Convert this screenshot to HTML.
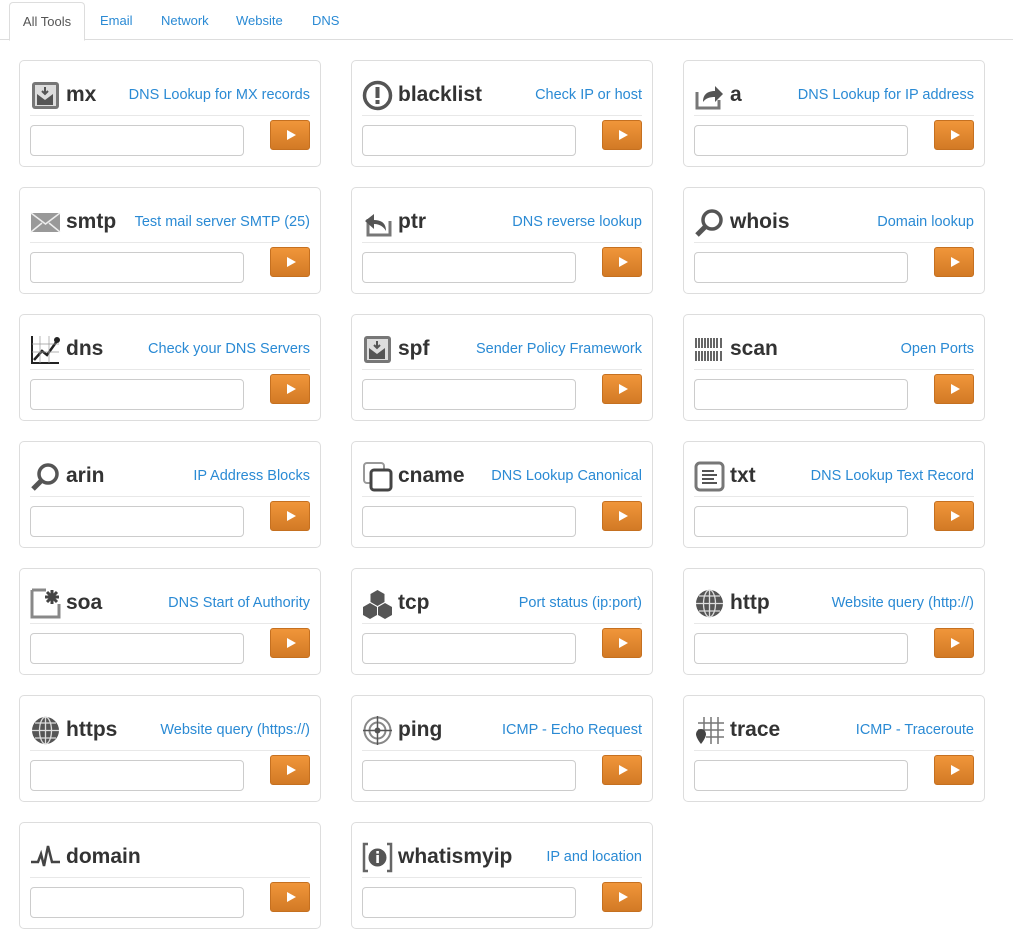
<!DOCTYPE html>
<html><head><meta charset="utf-8"><style>
*{box-sizing:border-box}
body{margin:0;width:1023px;height:916px;overflow:hidden;background:#fff;font-family:"Liberation Sans",Arial,sans-serif;position:relative}
.tabs{position:absolute;left:0;top:0;width:1013px;height:40px;border-bottom:1px solid #ddd}
.tab{position:absolute;top:13px;font-size:13px;color:#2a8ad4}
.tab.act{top:2px;left:9px;width:76px;height:39px;border:1px solid #ddd;border-bottom:1px solid #fff;border-radius:4px 4px 0 0;background:#fff;color:#555;padding-top:11px;text-align:center}
.card{position:absolute;width:302px;height:107px;border:1px solid #ddd;border-radius:5px;background:#fff}
.ic{position:absolute;left:10px;top:19px;width:31px;height:31px}
.t{position:absolute;left:46px;top:22px;font-size:21px;font-weight:bold;color:#333}
.d{position:absolute;right:10px;top:26px;font-size:14.5px;color:#2a8ad4}
.sep{position:absolute;left:10px;right:10px;top:54px;border-top:1px solid #e8e8e8}
.in{position:absolute;left:10px;top:64px;width:214px;height:31px;border:1px solid #ccc;border-radius:4px}
.b{position:absolute;left:250px;top:59px;width:40px;height:30px;border-radius:3px;background:linear-gradient(#f0963a,#d27a25);border:1px solid #c57020}
.b:after{content:"";position:absolute;left:16px;top:9px;border-left:9px solid #fff;border-top:5px solid transparent;border-bottom:5px solid transparent}
</style></head><body>
<div class="tabs">
<div class="tab act">All Tools</div>
<div class="tab" style="left:100px">Email</div>
<div class="tab" style="left:161px">Network</div>
<div class="tab" style="left:236px">Website</div>
<div class="tab" style="left:312px">DNS</div>
</div>
<script>
var d=[["mx","DNS Lookup for MX records","m"],["blacklist","Check IP or host","!"],["a","DNS Lookup for IP address","a"],
["smtp","Test mail server SMTP (25)","e"],["ptr","DNS reverse lookup","p"],["whois","Domain lookup","w"],
["dns","Check your DNS Servers","g"],["spf","Sender Policy Framework","m"],["scan","Open Ports","s"],
["arin","IP Address Blocks","w"],["cname","DNS Lookup Canonical","c"],["txt","DNS Lookup Text Record","t"],
["soa","DNS Start of Authority","o"],["tcp","Port status (ip:port)","h"],["http","Website query (http://)","G"],
["https","Website query (https://)","G"],["ping","ICMP - Echo Request","r"],["trace","ICMP - Traceroute","x"],
["domain","","z"],["whatismyip","IP and location","i"]];
var ic={
m:'<rect x="2" y="2" width="27" height="27" rx="3" fill="#777"/><rect x="5" y="5" width="21" height="21" fill="#ddd"/><path d="M7 14l8 6 8-6v11H7z" fill="#555"/><path d="M15 7v7m-3-3l3 3 3-3" stroke="#555" stroke-width="2" fill="none"/>',
"!":'<circle cx="15.5" cy="15.5" r="13" fill="none" stroke="#555" stroke-width="3.5"/><rect x="13.5" y="7" width="4" height="11" fill="#555"/><rect x="13.5" y="20" width="4" height="4" fill="#555"/>',
a:'<path d="M3 12v16h22v-8" stroke="#777" stroke-width="3" fill="none"/><path d="M9 22c0-8 5-11 12-11V6l8 8-8 8v-5c-5 0-9 1-12 5z" fill="#555"/>',
e:'<rect x="1" y="6" width="29" height="19" fill="#999"/><path d="M1 6l14.5 11L30 6M1 25l11-9M30 25l-11-9" stroke="#eee" stroke-width="1.5" fill="none"/>',
p:'<path d="M6 12v16h22V14" stroke="#777" stroke-width="3" fill="none"/><path d="M24 24c0-8-5-11-12-11V7L3 14l9 8v-5c5 0 9 2 12 7z" fill="#555"/>',
w:'<circle cx="18" cy="13" r="9" fill="none" stroke="#555" stroke-width="3.5"/><path d="M11 20l-8 8" stroke="#555" stroke-width="5"/>',
g:'<path d="M2 2v27h27" stroke="#222" stroke-width="2" fill="none"/><path d="M4 26l8-9 5 4 10-14" stroke="#222" stroke-width="2.5" fill="none"/><circle cx="27" cy="6" r="3" fill="#222"/><path d="M2 10h27M2 18h27M10 2v27M19 2v27" stroke="#999" stroke-width=".7"/>',
s:'<path d="M2 4v10M5 4v10M8 4v10M11 4v10M14 4v10M17 4v10M20 4v10M23 4v10M27 4v10M2 17v10M5 17v10M8 17v10M11 17v10M14 17v10M17 17v10M20 17v10M23 17v10M27 17v10" stroke="#666" stroke-width="2"/>',
c:'<rect x="2" y="2" width="20" height="20" rx="3" fill="none" stroke="#999" stroke-width="2"/><rect x="9" y="9" width="20" height="20" rx="3" fill="#fff" stroke="#444" stroke-width="3"/>',
t:'<rect x="2" y="2" width="27" height="27" rx="4" fill="none" stroke="#777" stroke-width="3"/><path d="M8 10h12M8 14h15M8 18h12M8 22h15" stroke="#555" stroke-width="2"/>',
o:'<path d="M2 2h14M2 2v27h27V16" stroke="#888" stroke-width="3" fill="none"/><path d="M22 2v14M15 9h14M17 4l10 10M27 4L17 14" stroke="#444" stroke-width="3"/>',
h:'<path d="M15.5 2l7 4v8l-7 4-7-4V6zM8 15l7 4v8l-7 4-7-4v-8zM23 15l7 4v8l-7 4-7-4v-8z" fill="#555"/>',
G:'<circle cx="15.5" cy="15.5" r="13.5" fill="#555"/><path d="M2 15.5h27M15.5 2v27M5 8h21M5 23h21" stroke="#ddd" stroke-width="1.3"/><ellipse cx="15.5" cy="15.5" rx="6" ry="13.5" fill="none" stroke="#ddd" stroke-width="1.3"/>',
r:'<circle cx="15.5" cy="15.5" r="13" fill="none" stroke="#888" stroke-width="2"/><circle cx="15.5" cy="15.5" r="8" fill="none" stroke="#888" stroke-width="2"/><circle cx="15.5" cy="15.5" r="3" fill="#555"/><path d="M15.5 1v29M1 15.5h29" stroke="#555" stroke-width="1.5"/>',
x:'<path d="M10 2v20M17 2v27M24 2v27M4 8h26M4 15h26M12 22h18" stroke="#777" stroke-width="1.5"/><path d="M7 14a5 5 0 0 1 5 5c0 4-5 10-5 10s-5-6-5-10a5 5 0 0 1 5-5z" fill="#444"/>',
z:'<path d="M1 20h7l3-8 3 12 4-20 4 16h8" stroke="#444" stroke-width="2.5" fill="none"/>',
i:'<path d="M6 2H2v27h4M25 2h4v27h-4" stroke="#666" stroke-width="2.5" fill="none"/><circle cx="15.5" cy="15.5" r="9" fill="#555"/><rect x="14.3" y="13" width="2.6" height="8" fill="#fff"/><rect x="14.3" y="9" width="2.6" height="2.6" fill="#fff"/>'
};
var h='';
d.forEach(function(c,k){var x=[19,351,683][k%3],y=60+127*Math.floor(k/3);
h+='<div class="card" style="left:'+x+'px;top:'+y+'px"><svg class="ic" viewBox="0 0 31 31">'+ic[c[2]]+'</svg><div class="t">'+c[0]+'</div><div class="d">'+c[1]+'</div><div class="sep"></div><div class="in"></div><div class="b"></div></div>';});
document.write(h);
</script>
</body></html>
